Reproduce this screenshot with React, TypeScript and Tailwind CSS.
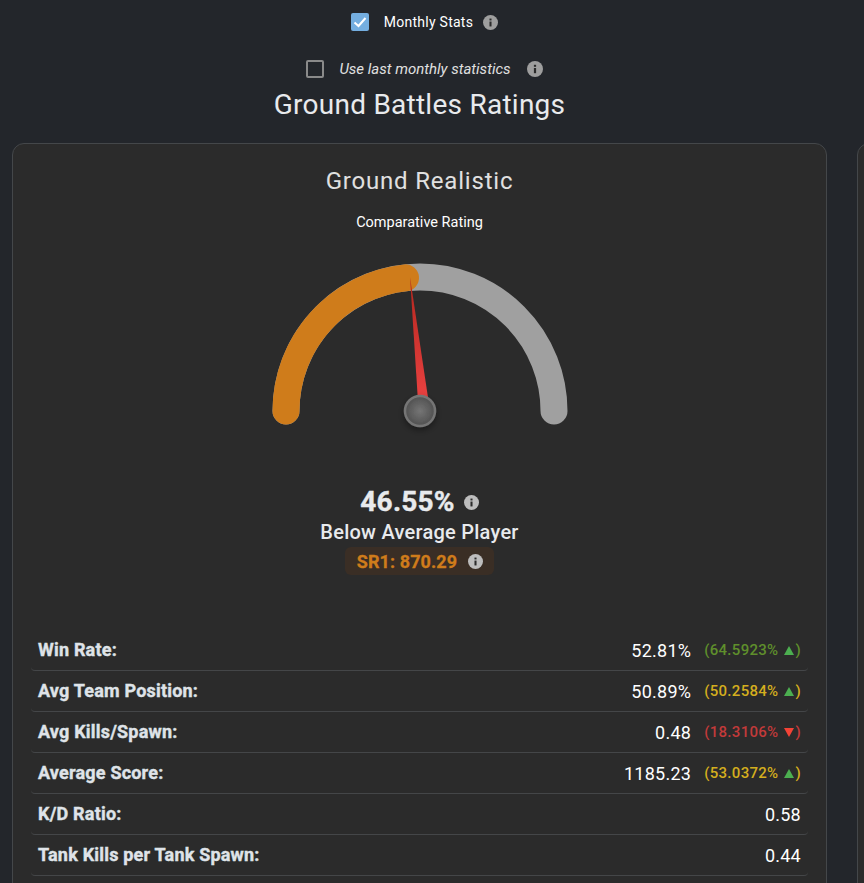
import React from 'react';

const InfoIcon = ({ size = 15, color = '#9e9e9e' }: { size?: number; color?: string }) => (
    <svg width={size} height={size} viewBox="0 0 16 16" className="shrink-0">
        <circle cx="8" cy="8" r="8" fill={color} />
        <rect x="6.9" y="7" width="2.2" height="5.2" fill="#2b2b2b" />
        <rect x="6.9" y="3.8" width="2.2" height="2" fill="#2b2b2b" />
    </svg>
);

const Gauge = () => (
    <svg width="320" height="190" viewBox="260 250 320 190" className="block">
        <defs>
            <linearGradient id="needle" x1="0" y1="0" x2="0" y2="1">
                <stop offset="0" stopColor="#b3261e" />
                <stop offset="1" stopColor="#ef4444" />
            </linearGradient>
            <radialGradient id="knob">
                <stop offset="0" stopColor="#757575" />
                <stop offset="1" stopColor="#505050" />
            </radialGradient>
            <filter id="knobShadow" x="-50%" y="-50%" width="200%" height="200%">
                <feDropShadow dx="0" dy="3" stdDeviation="3" floodColor="#000" floodOpacity="0.4" />
            </filter>
        </defs>
        <path d="M 286 411 A 134 134 0 0 1 554 411" fill="none" stroke="#a0a0a0" strokeWidth="27" strokeLinecap="round" />
        <path d="M 286 411 A 134 134 0 0 1 405.5 277.8" fill="none" stroke="#cf7c1b" strokeWidth="27" strokeLinecap="round" />
        <polygon points="410,277 418.6,411 430,411" fill="url(#needle)" />
        <circle cx="420" cy="411" r="15" fill="url(#knob)" stroke="#757575" strokeWidth="2.5" filter="url(#knobShadow)" />
    </svg>
);

type Delta = { text: string; color: string; up: boolean };

const rows: { label: string; value: string; delta?: Delta }[] = [
    { label: 'Win Rate:', value: '52.81%', delta: { text: '64.5923%', color: 'text-[#5f8f2b]', up: true } },
    { label: 'Avg Team Position:', value: '50.89%', delta: { text: '50.2584%', color: 'text-[#d4ae1e]', up: true } },
    { label: 'Avg Kills/Spawn:', value: '0.48', delta: { text: '18.3106%', color: 'text-[#c23a3a]', up: false } },
    { label: 'Average Score:', value: '1185.23', delta: { text: '53.0372%', color: 'text-[#d4ae1e]', up: true } },
    { label: 'K/D Ratio:', value: '0.58' },
    { label: 'Tank Kills per Tank Spawn:', value: '0.44' },
];

const StatRow = ({ label, value, delta }: (typeof rows)[number]) => (
    <div className="flex h-[41px] items-center justify-between rounded-b-[4px] border-b border-[#444648] px-[7px]">
        <span className="mb-[2px] text-[18px] font-bold tracking-[0.2px] text-[#dfe3e8] [-webkit-text-stroke:0.4px_#dfe3e8]">{label}</span>
        <div className="flex items-center">
            <span className="text-[18px] tracking-[0.25px] text-white">{value}</span>
            {delta && (
                <span className={`ml-[13px] flex items-center text-[15px] font-medium tracking-[0.3px] ${delta.color}`}>
                    (<span>{delta.text}</span>
                    <svg width="10" height="9" viewBox="0 0 10 9" className="ml-[6px]">
                        <polygon
                            points={delta.up ? '5,0 10,9 0,9' : '0,0 10,0 5,9'}
                            fill={delta.up ? '#4caf50' : '#f44336'}
                        />
                    </svg>
                    <span className="ml-[1px]">)</span>
                </span>
            )}
        </div>
    </div>
);

export default function App() {
    return (
        <div className="h-[883px] overflow-hidden bg-[#23262b] font-['Roboto',sans-serif]">
            <div className="w-[839px]">
                <div className="flex h-[44px] items-center justify-center pl-[10px]">
                    <span className="flex h-[18px] w-[18px] items-center justify-center rounded-[2px] bg-[#74aee0]">
                        <svg width="16" height="16" viewBox="0 0 16 16">
                            <path d="M2.5 8.5 L6.5 12 L13.5 4" fill="none" stroke="#fff" strokeWidth="2" />
                        </svg>
                    </span>
                    <span className="ml-[15px] text-[14px] tracking-[0.25px] text-white">Monthly Stats</span>
                    <span className="ml-[10px]">
                        <InfoIcon />
                    </span>
                </div>
                <div className="mt-[4px] flex h-[42px] items-center justify-center pl-[10px]">
                    <span className="h-[18px] w-[18px] rounded-[2px] border-2 border-[#8a8a8a]" />
                    <span className="ml-[15px] text-[15px] italic text-[#e0e0e0]">Use last monthly statistics</span>
                    <span className="ml-[16px]">
                        <InfoIcon size={16} />
                    </span>
                </div>
                <h1 className="mt-[-2px] text-center text-[28px] leading-[34px] tracking-[0.25px] text-[#e8eaed]">
                    Ground Battles Ratings
                </h1>
            </div>
            <div className="mt-[21px] flex gap-[30px] pl-[12px]">
                <div className="w-[815px] shrink-0 rounded-[12px] border border-[#44474a] bg-[#2b2b2b] px-[18px]">
                    <h2 className="mt-[21px] text-center text-[24px] leading-[32px] tracking-[0.8px] text-[#e0e0e0]">
                        Ground Realistic
                    </h2>
                    <p className="mt-[16px] text-center text-[14.5px] leading-[20px] text-white">Comparative Rating</p>
                    <div className="mt-[17px] flex justify-center pl-[1px]">
                        <Gauge />
                    </div>
                    <div className="mt-[45px] flex items-center justify-center">
                        <span className="text-[28px] font-bold leading-[34px] tracking-[0.2px] text-[#e8eaed] [-webkit-text-stroke:0.4px_#e8eaed]">46.55%</span>
                        <span className="ml-[9px]">
                            <InfoIcon color="#bdbdbd" />
                        </span>
                    </div>
                    <p className="mt-[1px] text-center text-[20px] font-medium leading-[24px] tracking-[0.25px] text-[#e8eaed]">
                        Below Average Player
                    </p>
                    <div className="mt-[3px] flex justify-center">
                        <div className="flex h-[28px] items-center rounded-[6px] bg-[#3a2e25] pl-[12px] pr-[11px]">
                            <span className="text-[18px] font-bold tracking-[0.1px] text-[#cf7c1b] [-webkit-text-stroke:0.3px_#cf7c1b]">SR1: 870.29</span>
                            <span className="ml-[11px]">
                                <InfoIcon color="#bdbdbd" />
                            </span>
                        </div>
                    </div>
                    <div className="mt-[55px] pb-[20px]">
                        {rows.map((r) => (
                            <StatRow key={r.label} {...r} />
                        ))}
                    </div>
                </div>
                <div className="w-[815px] shrink-0 rounded-[12px] border border-[#44474a] bg-[#2b2b2b]" />
            </div>
        </div>
    );
}
